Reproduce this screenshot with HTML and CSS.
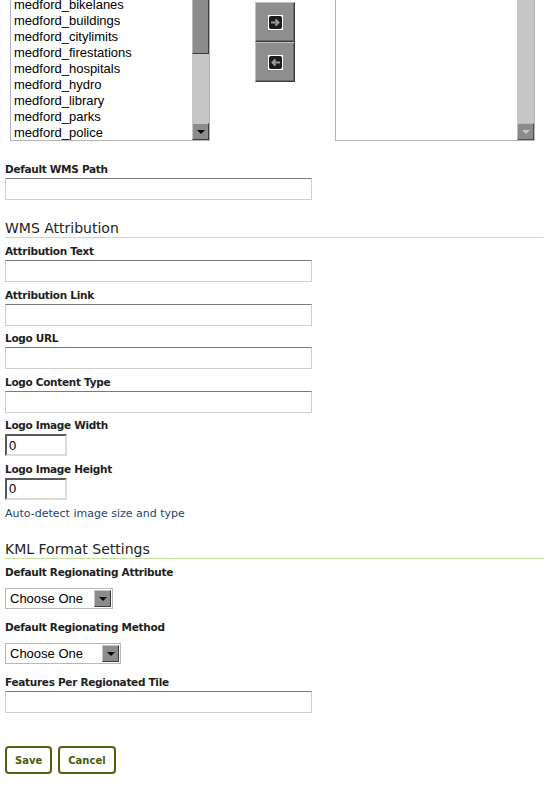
FILE: index.html
```html
<!DOCTYPE html>
<html>
<head>
<meta charset="utf-8">
<link rel="stylesheet" href="styles.css">
</head>
<body>
<div class="chooser">
  <div class="listbox">
    <ul class="items">
      <li>medford_address</li>
      <li>medford_bikelanes</li>
      <li>medford_buildings</li>
      <li>medford_citylimits</li>
      <li>medford_firestations</li>
      <li>medford_hospitals</li>
      <li>medford_hydro</li>
      <li>medford_library</li>
      <li>medford_parks</li>
      <li>medford_police</li>
    </ul>
    <div class="scrollbar">
      <div class="thumb"></div>
      <div class="track"></div>
      <div class="sb-btn"><span class="tri"></span></div>
    </div>
  </div>
  <div class="movers">
    <button class="mover" type="button">
      <svg width="15" height="15" viewBox="0 0 15 15"><rect x="0" y="0" width="15" height="15" fill="#fff"/><rect x="1" y="1" width="13" height="13" rx="2" fill="#1c1c1c"/><path d="M3 7.5H10M7.5 4.5L10.5 7.5L7.5 10.5" stroke="#9a9a9a" stroke-width="2" fill="none"/></svg>
    </button>
    <button class="mover" type="button">
      <svg width="15" height="15" viewBox="0 0 15 15"><rect x="0" y="0" width="15" height="15" fill="#fff"/><rect x="1" y="1" width="13" height="13" rx="2" fill="#1c1c1c"/><path d="M12 7.5H5M7.5 4.5L4.5 7.5L7.5 10.5" stroke="#9a9a9a" stroke-width="2" fill="none"/></svg>
    </button>
  </div>
  <div class="listbox">
    <ul class="items"></ul>
    <div class="scrollbar">
      <div class="track"></div>
      <div class="sb-btn disabled"><span class="tri"></span></div>
    </div>
  </div>
</div>

<form class="form">
  <div class="field">
    <label>Default WMS Path</label>
    <input class="text" type="text">
  </div>

  <h3 class="section">WMS Attribution</h3>
  <div class="field">
    <label>Attribution Text</label>
    <input class="text" type="text">
  </div>
  <div class="field">
    <label>Attribution Link</label>
    <input class="text" type="text">
  </div>
  <div class="field">
    <label>Logo URL</label>
    <input class="text" type="text">
  </div>
  <div class="field">
    <label>Logo Content Type</label>
    <input class="text" type="text">
  </div>
  <div class="field">
    <label>Logo Image Width</label>
    <input class="num" type="text" value="0">
  </div>
  <div class="field">
    <label>Logo Image Height</label>
    <input class="num" type="text" value="0">
  </div>
  <a class="link" href="#">Auto-detect image size and type</a>

  <h3 class="section kml">KML Format Settings</h3>
  <div class="field sel-field">
    <label>Default Regionating Attribute</label>
    <div class="select w1"><span class="sel-text">Choose One</span><span class="sel-btn"><span class="tri"></span></span></div>
  </div>
  <div class="field sel-field">
    <label>Default Regionating Method</label>
    <div class="select w2"><span class="sel-text">Choose One</span><span class="sel-btn"><span class="tri"></span></span></div>
  </div>
  <div class="field">
    <label>Features Per Regionated Tile</label>
    <input class="text" type="text">
  </div>

  <div class="actions">
    <button class="btn" type="button">Save</button>
    <button class="btn" type="button">Cancel</button>
  </div>
</form>
</body>
</html>
```

FILE: styles.css
```css
html, body {
  margin: 0;
  padding: 0;
  background: #fff;
}
body {
  font-family: "DejaVu Sans", Verdana, sans-serif;
  color: #222;
}

/* ---- dual list chooser ---- */
.chooser {
  display: flex;
  align-items: flex-start;
  margin-top: -21px;
  padding-left: 10px;
}
.listbox {
  box-sizing: border-box;
  width: 200px;
  height: 162px;
  border: 1px solid #b4b4b4;
  display: flex;
  background: #fff;
}
.items {
  list-style: none;
  margin: 0;
  padding: 1px 0 0 3px;
  flex: 1;
  overflow: hidden;
  font-family: "Liberation Sans", Arial, sans-serif;
  font-size: 13px;
  line-height: 16px;
  color: #000;
}
.scrollbar {
  width: 17px;
  display: flex;
  flex-direction: column;
  background: #c6c6c6;
}
.thumb {
  box-sizing: border-box;
  height: 74px;
  background: #8c8c8c;
  border: 1px solid;
  border-color: #b8b8b8 #3c3c3c #3c3c3c #b8b8b8;
}
.track {
  flex: 1;
}
.sb-btn {
  box-sizing: border-box;
  height: 17px;
  background: #8c8c8c;
  border: 1px solid;
  border-color: #c4c4c4 #3c3c3c #3c3c3c #c4c4c4;
  display: flex;
  align-items: center;
  justify-content: center;
}
.tri {
  width: 0;
  height: 0;
  border-left: 4px solid transparent;
  border-right: 4px solid transparent;
  border-top: 4px solid #000;
}
.sb-btn.disabled {
  border-color: #bcbcbc #505050 #505050 #bcbcbc;
}
.sb-btn.disabled .tri {
  border-top-color: #c8c8c8;
}
.movers {
  display: flex;
  flex-direction: column;
  margin: 23px 40px 0 45px;
}
.mover {
  box-sizing: border-box;
  width: 40px;
  height: 40px;
  padding: 0;
  margin: 0;
  background: #8e8e8e;
  border: 1px solid;
  border-color: #c2c2c2 #3a3a3a #3a3a3a #c2c2c2;
  box-shadow: inset -1px -1px 0 #6a6a6a;
  display: flex;
  align-items: center;
  justify-content: center;
}
.mover svg {
  display: block;
}

/* ---- form ---- */
.form {
  padding: 20px 4px 40px 5px;
  display: flex;
  flex-direction: column;
  align-items: flex-start;
}
.field {
  display: flex;
  flex-direction: column;
  align-items: flex-start;
  gap: 2px;
  margin-bottom: 4.5px;
}
.field label {
  padding-top: 1px;
  font-weight: bold;
  font-size: 10.5px;
  letter-spacing: -0.3px;
  line-height: 14px;
  color: #1e1e1e;
}
.text {
  box-sizing: border-box;
  width: 307px;
  height: 22px;
  margin: 0;
  padding: 0 3px;
  border: 1px solid;
  border-color: #7a7a7a #cfcfcf #cfcfcf #cfcfcf;
  background: #fff;
  font-family: "Liberation Sans", Arial, sans-serif;
  font-size: 13px;
}
.num {
  box-sizing: border-box;
  width: 62px;
  height: 22px;
  margin: 0;
  padding: 0 2px;
  border: 2px solid;
  border-color: #5a5a5a #dcdcdc #dcdcdc #5a5a5a;
  background: #fff;
  font-family: "Liberation Sans", Arial, sans-serif;
  font-size: 13px;
  color: #000;
}
.section {
  align-self: stretch;
  margin: 14.5px 0 5px 0;
  font-weight: normal;
  font-size: 14px;
  line-height: 18px;
  color: #222;
  border-bottom: 1px solid #c6e0a0;
}
.section.kml {
  margin-top: 19px;
  margin-bottom: 6px;
}
.link {
  margin-top: 2px;
  font-size: 11px;
  line-height: 15px;
  color: #1b4670;
  text-decoration: none;
}
.sel-field {
  gap: 9px;
  margin-bottom: 11px;
}
.sel-field label {
  padding-top: 0;
}
.sel-field + .field:not(.sel-field) {
  margin-top: -1px;
}
.select {
  box-sizing: border-box;
  height: 21px;
  border: 1px solid #b8b8b8;
  background: #fff;
  display: flex;
  align-items: center;
  justify-content: space-between;
  padding: 0 1px 0 4px;
  font-family: "Liberation Sans", Arial, sans-serif;
  font-size: 13px;
  color: #000;
}
.select.w1 { width: 108px; }
.select.w2 { width: 116px; }
.sel-btn {
  box-sizing: border-box;
  width: 17px;
  height: 17px;
  background: #8c8c8c;
  border: 1px solid;
  border-color: #c4c4c4 #3a3a3a #3a3a3a #c4c4c4;
  display: flex;
  align-items: center;
  justify-content: center;
}
.actions {
  display: flex;
  gap: 6px;
  margin-top: 28.5px;
}
.btn {
  box-sizing: border-box;
  height: 28px;
  margin: 0;
  padding: 0 8px;
  background: #fff;
  border: 2px solid #4f6313;
  border-radius: 4px;
  font-family: "DejaVu Sans", Verdana, sans-serif;
  font-weight: bold;
  font-size: 10px;
  color: #4a5c0c;
}
```
